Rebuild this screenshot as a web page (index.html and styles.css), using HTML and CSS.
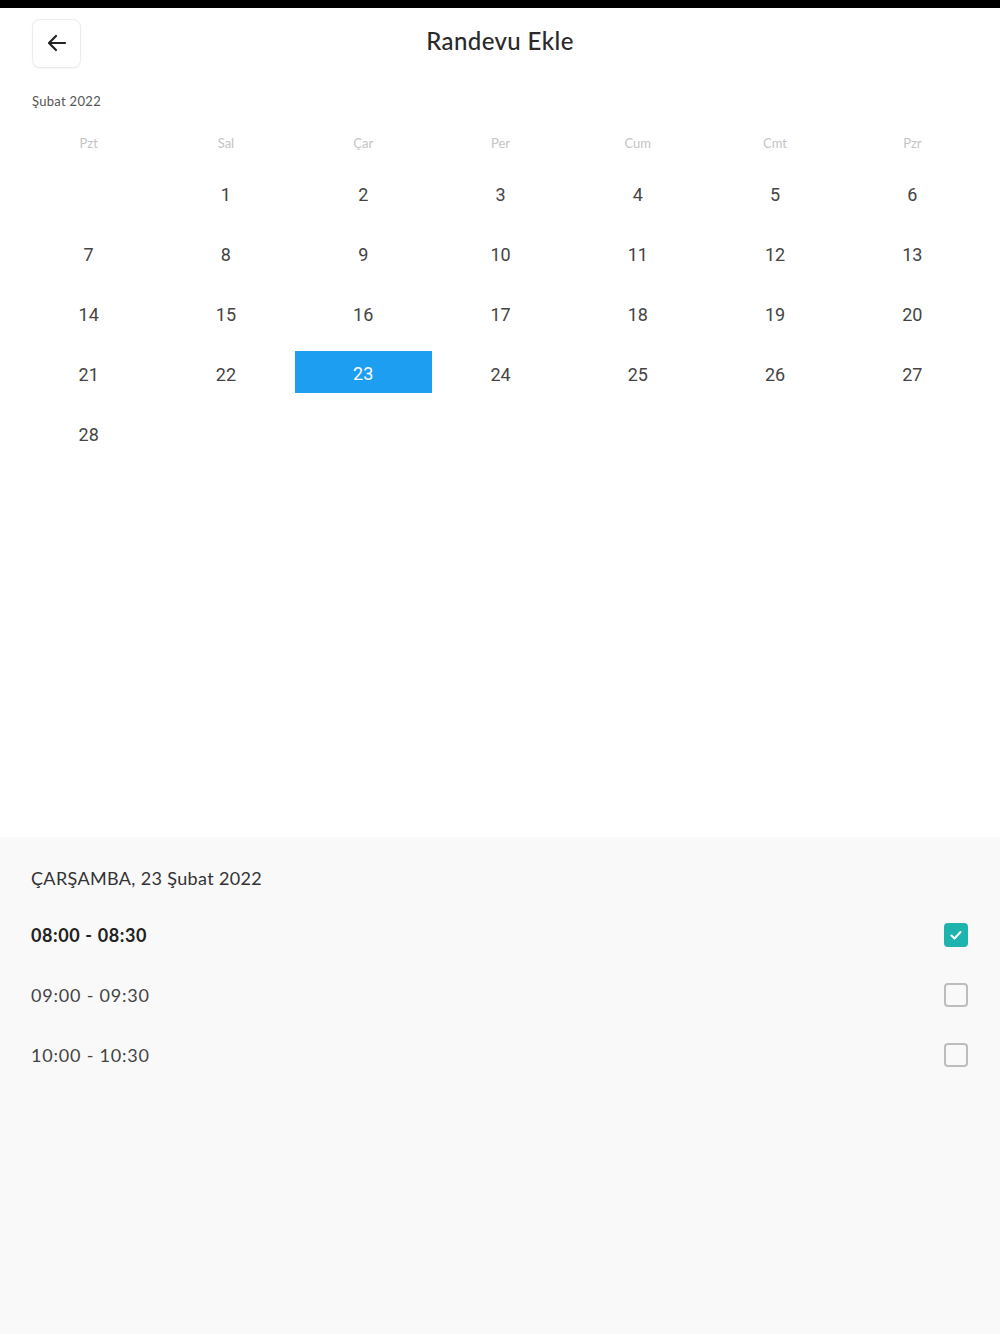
FILE: index.html
```html
<!DOCTYPE html>
<html lang="tr">
<head>
    <meta charset="UTF-8">
    <meta name="viewport" content="width=device-width, initial-scale=1.0">
    <title>Randevu Ekle</title>
    <link rel="stylesheet" href="styles.css">
</head>
<body>
    <div class="status-bar"></div>

    <header class="top-bar">
        <button class="back-btn" aria-label="Geri">
            <svg width="24" height="24" viewBox="0 0 24 24" fill="none" stroke="#222" stroke-width="2.2" stroke-linecap="round" stroke-linejoin="round">
                <path d="M20 12H5"/>
                <path d="M11 5l-7 7 7 7"/>
            </svg>
        </button>
        <h1>Randevu Ekle</h1>
    </header>

    <div class="calendar">
        <div class="month">Şubat 2022</div>
        <div class="week-head">
            <span>Pzt</span><span>Sal</span><span>Çar</span><span>Per</span><span>Cum</span><span>Cmt</span><span>Pzr</span>
        </div>
        <div class="days">
            <span></span><span>1</span><span>2</span><span>3</span><span>4</span><span>5</span><span>6</span>
            <span>7</span><span>8</span><span>9</span><span>10</span><span>11</span><span>12</span><span>13</span>
            <span>14</span><span>15</span><span>16</span><span>17</span><span>18</span><span>19</span><span>20</span>
            <span>21</span><span>22</span><span class="selected">23</span><span>24</span><span>25</span><span>26</span><span>27</span>
            <span>28</span>
        </div>
    </div>

    <section class="slots">
        <div class="slot-date">ÇARŞAMBA, 23 Şubat 2022</div>
        <div class="slot active">
            <span>08:00 - 08:30</span>
            <span class="check checked">
                <svg width="16" height="16" viewBox="0 0 16 16" fill="none" stroke="#fff" stroke-width="2" stroke-linecap="round" stroke-linejoin="round"><path d="M3.5 8.5l3 3 6-6.5"/></svg>
            </span>
        </div>
        <div class="slot">
            <span>09:00 - 09:30</span>
            <span class="check"></span>
        </div>
        <div class="slot">
            <span>10:00 - 10:30</span>
            <span class="check"></span>
        </div>
    </section>
</body>
</html>
```

FILE: styles.css
```css
html, body {
    height: 100%;
}
body {
    margin: 0;
    font-family: Lato, "Noto Sans", sans-serif;
    background-color: #ffffff;
    color: #333;
    display: flex;
    flex-direction: column;
    min-height: 1334px;
}
.status-bar {
    height: 8px;
    background-color: #000;
}
.top-bar {
    display: flex;
    align-items: center;
    padding: 11px 32px 0;
    position: relative;
    height: 48px;
}
.back-btn {
    width: 49px;
    height: 49px;
    border: 1px solid #ececec;
    border-radius: 8px;
    background: #fff;
    display: flex;
    align-items: center;
    justify-content: center;
    padding: 0;
    box-shadow: 0 1px 2px rgba(0,0,0,0.04);
}
.top-bar h1 {
    position: absolute;
    left: 0;
    right: 0;
    top: 21px;
    margin: 0;
    text-align: center;
    font-size: 24px;
    font-weight: 500;
    letter-spacing: 0.4px;
    color: #2a2a2a;
    line-height: 1;
    pointer-events: none;
}
.calendar {
    padding: 0 19px 0 20px;
}
.month {
    margin: 26px 0 0 12px;
    font-size: 13px;
    letter-spacing: 0.3px;
    color: #555;
    line-height: 16px;
}
.week-head,
.days {
    display: grid;
    grid-template-columns: repeat(7, 1fr);
}
.week-head {
    margin-top: 26px;
    height: 16px;
    line-height: 16px;
    font-size: 13px;
    color: #c4c4c4;
    text-align: center;
}
.days {
    margin-top: 13px;
    grid-auto-rows: 60px;
}
.days span {
    display: flex;
    align-items: center;
    justify-content: center;
    font-family: Roboto, "Noto Sans", sans-serif;
    font-size: 18px;
    color: #444;
}
.days span.selected {
    background-color: #1e9ef0;
    color: #fff;
    height: 42px;
    box-sizing: border-box;
    padding-top: 3px;
    margin-top: 7px;
}
.slots {
    margin-top: auto;
    height: 497px;
    background-color: #f9f9f9;
    padding: 30px 32px 0 31px;
    box-sizing: border-box;
}
.slot-date {
    font-size: 18px;
    letter-spacing: 0.35px;
    color: #333;
    line-height: 22px;
    margin-bottom: 16px;
}
.slot {
    display: flex;
    align-items: center;
    justify-content: space-between;
    height: 60px;
    font-size: 18px;
    letter-spacing: 0.8px;
    color: #444;
}
.slot.active {
    font-weight: 700;
    letter-spacing: 0.6px;
    color: #222;
}
.check {
    width: 20px;
    height: 20px;
    border: 2px solid #bdbdbd;
    border-radius: 4px;
    display: flex;
    align-items: center;
    justify-content: center;
}
.check.checked {
    background-color: #1fb3ae;
    border-color: #1fb3ae;
}
```
